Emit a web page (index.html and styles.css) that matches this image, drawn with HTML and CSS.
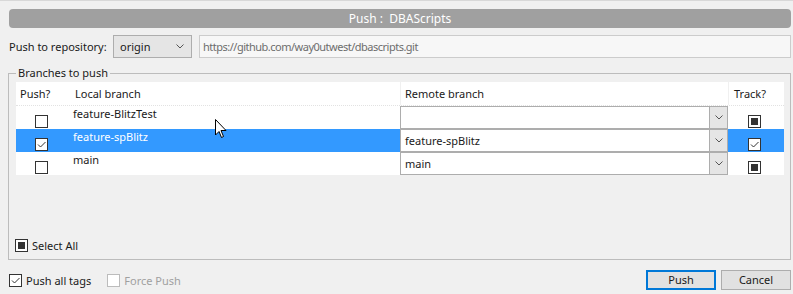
FILE: index.html
```html
<!DOCTYPE html>
<html>
<head>
<meta charset="utf-8">
<link rel="stylesheet" href="styles.css">
</head>
<body>
<div class="window">
  <div class="title">Push :  DBAScripts</div>
  <div class="repo-row">
    <span class="repo-label">Push to repository:</span>
    <div class="combo repo-combo">
      <span class="combo-text">origin</span>
      <svg class="chev" width="8" height="5" viewBox="0 0 8 5"><path d="M0.5 0.5 L4 4 L7.5 0.5" fill="none" stroke="#555" stroke-width="1"/></svg>
    </div>
    <div class="url">https://github.com/way0utwest/dbascripts.git</div>
  </div>
  <fieldset class="group">
    <legend>Branches to push</legend>
    <div class="table">
      <div class="row head">
        <div class="cell c-push">Push?</div>
        <div class="cell c-local">Local branch</div>
        <div class="cell c-remote">Remote branch</div>
        <div class="cell c-track">Track?</div>
      </div>
      <div class="row">
        <div class="cell c-push"><span class="cb"></span></div>
        <div class="cell c-local">feature-BlitzTest</div>
        <div class="cell c-remote"><div class="rcombo"><span class="rtext"></span><span class="rbtn"><svg width="8" height="5" viewBox="0 0 8 5"><path d="M0.5 0.5 L4 4 L7.5 0.5" fill="none" stroke="#555" stroke-width="1"/></svg></span></div></div>
        <div class="cell c-track"><span class="cb indet"></span></div>
      </div>
      <div class="row selected">
        <div class="cell c-push"><span class="cb checked"><svg width="11" height="11" viewBox="0 0 11 11"><path d="M2 5.5 L4.5 8 L9.5 3" fill="none" stroke="#333" stroke-width="1"/></svg></span></div>
        <div class="cell c-local">feature-spBlitz</div>
        <div class="cell c-remote"><div class="rcombo"><span class="rtext">feature-spBlitz</span><span class="rbtn"><svg width="8" height="5" viewBox="0 0 8 5"><path d="M0.5 0.5 L4 4 L7.5 0.5" fill="none" stroke="#555" stroke-width="1"/></svg></span></div></div>
        <div class="cell c-track"><span class="cb checked"><svg width="11" height="11" viewBox="0 0 11 11"><path d="M2 5.5 L4.5 8 L9.5 3" fill="none" stroke="#333" stroke-width="1"/></svg></span></div>
      </div>
      <div class="row">
        <div class="cell c-push"><span class="cb"></span></div>
        <div class="cell c-local">main</div>
        <div class="cell c-remote"><div class="rcombo"><span class="rtext">main</span><span class="rbtn"><svg width="8" height="5" viewBox="0 0 8 5"><path d="M0.5 0.5 L4 4 L7.5 0.5" fill="none" stroke="#555" stroke-width="1"/></svg></span></div></div>
        <div class="cell c-track"><span class="cb indet"></span></div>
      </div>
    </div>
    <div class="select-all"><span class="cb indet"></span><span class="lbl">Select All</span></div>
  </fieldset>
  <div class="footer">
    <div class="opt"><span class="cb checked"><svg width="11" height="11" viewBox="0 0 11 11"><path d="M2 5.5 L4.5 8 L9.5 3" fill="none" stroke="#333" stroke-width="1"/></svg></span><span class="lbl">Push all tags</span></div>
    <div class="opt disabled"><span class="cb"></span><span class="lbl">Force Push</span></div>
    <div class="buttons">
      <button class="btn primary">Push</button>
      <button class="btn">Cancel</button>
    </div>
  </div>
  <svg class="cursor" width="13" height="20" viewBox="0 0 13 20"><path d="M0.5 0.5 L0.5 16 L4 12.5 L6.5 18.5 L8.5 17.5 L6 11.5 L11 11.5 Z" fill="#fff" stroke="#000" stroke-width="1" stroke-linejoin="miter"/></svg>
</div>
</body>
</html>
```
FILE: styles.css
```css
* { box-sizing: border-box; }
html, body { margin: 0; padding: 0; }
body {
  background: #f0f0f0;
  font-family: "Noto Sans", "Open Sans", sans-serif;
  font-size: 11px;
  color: #1a1a1a;
}
.window {
  position: relative;
  width: 793px;
  height: 294px;
  border-top: 1px solid #d8d8d8;
  padding: 8px 2px 0 9px;
  overflow: hidden;
}
.title {
  height: 19px;
  background: #a0a0a0;
  border-radius: 4px;
  color: #fff;
  font-size: 12px;
  text-align: center;
  line-height: 19px;
  white-space: pre;
}
.repo-row {
  margin-top: 7px;
  height: 23px;
  display: flex;
  align-items: center;
}
.repo-label { width: 104px; white-space: nowrap; }
.combo {
  height: 23px;
  border: 1px solid #adadad;
  background: #e5e5e5;
  display: flex;
  align-items: center;
}
.repo-combo { width: 79px; padding-left: 6px; padding-right: 7px; justify-content: space-between; }
.url {
  margin-left: 7px;
  flex: 1;
  height: 23px;
  border: 1px solid #cccccc;
  background: #f7f7f7;
  color: #6d6d6d;
  padding-left: 3px;
  line-height: 21px;
  letter-spacing: -0.5px;
}
.group {
  margin: 7px 0 0 -1px;
  border: 1px solid #bcbcbc;
  padding: 1px 6px 6px 7px;
  min-width: 0;
}
.group legend {
  padding: 0 2px;
  line-height: 16px;
}
.table {
  width: 768px;
  background: #fff;
}
.row {
  display: grid;
  grid-template-columns: 54px 330px 328px 56px;
  height: 23px;
}
.row.head {
  height: 24px;
  border-bottom: 1px dotted #e2e2e2;
}
.row.head .cell { display: flex; align-items: center; }
.row.head .c-push { padding-left: 4px; }
.row.head .c-local { padding-left: 5px; }
.row.head .c-remote { padding-left: 4px; border-left: 1px solid #f0f0f0; }
.row.head .c-track { padding-left: 5px; border-left: 1px solid #f0f0f0; }
.row.selected .cell { background: #3399ff; }
.row.selected .c-local { color: #fff; }
.row.selected .c-remote { background: transparent; }
.cell { line-height: 16px; white-space: nowrap; }
.row:not(.head) .c-push { padding: 6px 0 0 19px; }
.row:not(.head) .c-local { padding-left: 3px; }
.row:not(.head) .c-track { padding: 6px 0 0 20px; }
.cb {
  display: inline-flex;
  align-items: center;
  justify-content: center;
  flex: none;
  width: 13px;
  height: 13px;
  border: 1px solid #333;
  background: #fff;
  vertical-align: middle;
}
.cb.indet::after {
  content: "";
  width: 7px;
  height: 7px;
  background: #333;
}
.rcombo {
  height: 23px;
  border: 1px solid #adadad;
  background: #fff;
  display: flex;
}
.rtext { flex: 1; padding-left: 4px; line-height: 21px; }
.rbtn {
  width: 18px;
  background: #e5e5e5;
  border-left: 1px solid #adadad;
  display: flex;
  align-items: center;
  justify-content: center;
}
.select-all {
  margin-top: 62px;
  margin-left: -1px;
  height: 16px;
  display: flex;
  align-items: center;
}
.select-all .lbl, .opt .lbl { margin-left: 4px; }
.footer {
  margin-top: 10px;
  height: 20px;
  display: flex;
  align-items: center;
}
.opt { display: flex; align-items: center; }
.opt + .opt { margin-left: 16px; }
.opt.disabled .cb { border-color: #bcbcbc; }
.opt.disabled .lbl { color: #a0a0a0; }
.buttons { margin-left: auto; display: flex; gap: 5px; }
.btn {
  width: 70px;
  height: 20px;
  font-family: inherit;
  font-size: 11px;
  color: #1a1a1a;
  background: #e1e1e1;
  border: 1px solid #adadad;
  padding: 0;
  line-height: 16px;
}
.btn.primary { border: 2px solid #0078d7; line-height: 14px; }
.cursor {
  position: absolute;
  left: 215px;
  top: 118px;
}
```
